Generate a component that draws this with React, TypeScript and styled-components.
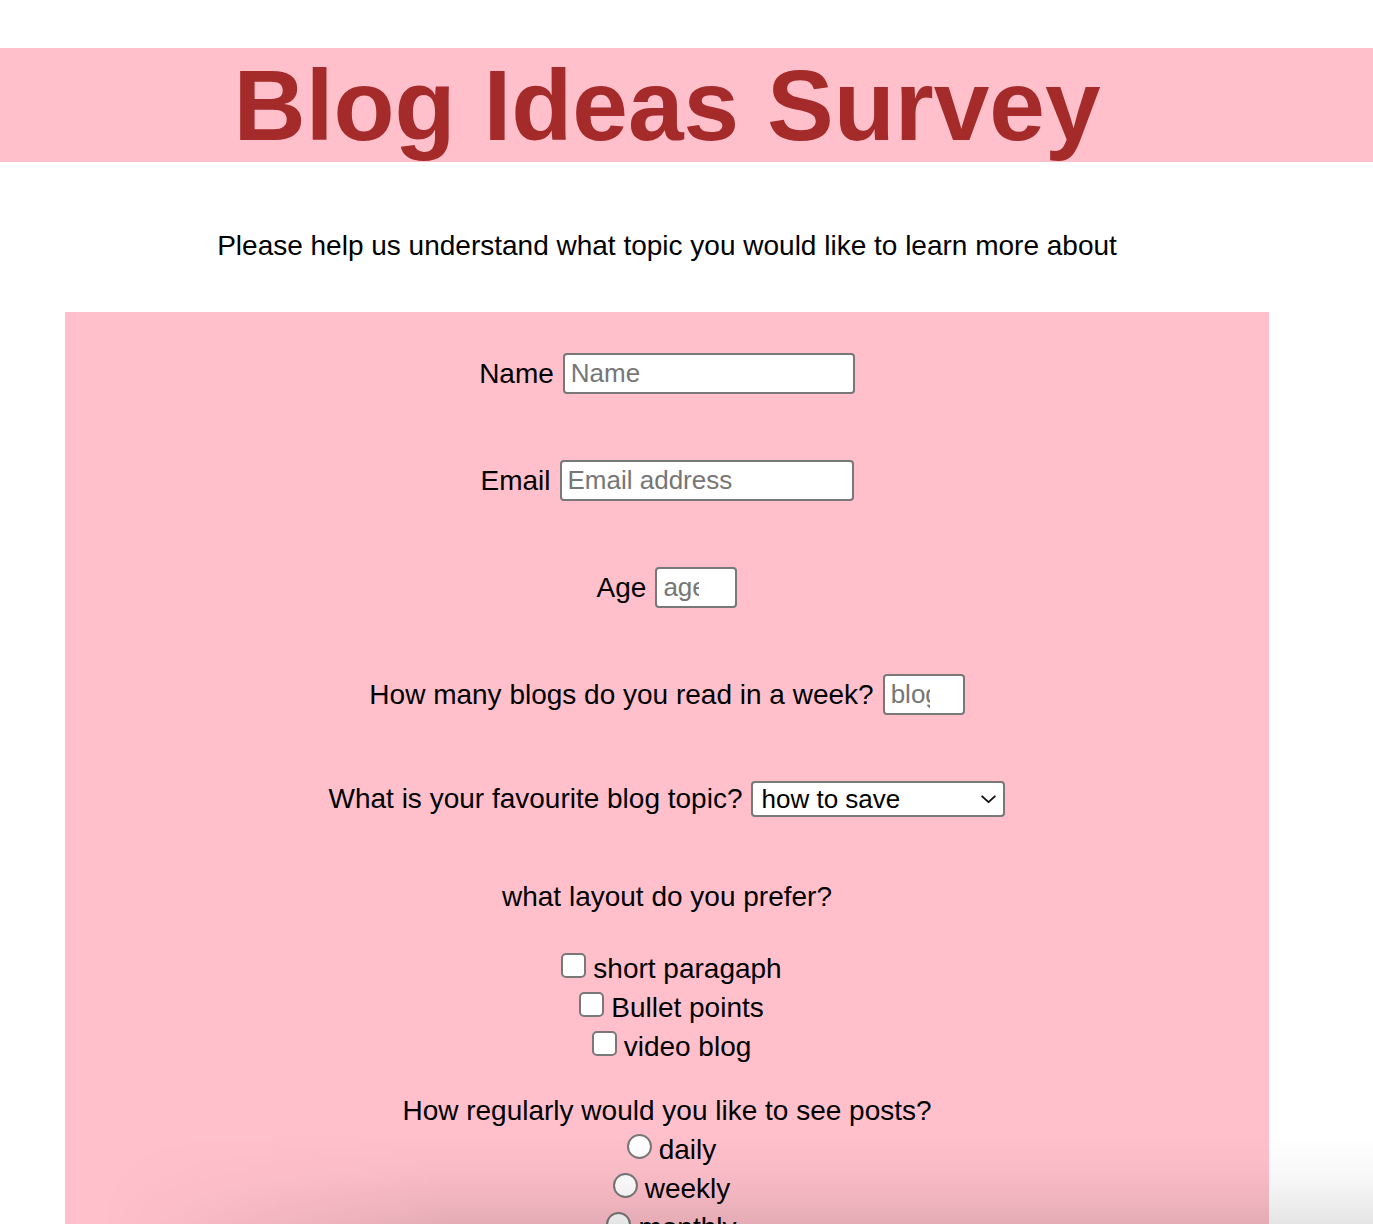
import React from "react";
import styled, { createGlobalStyle } from "styled-components";

const GlobalStyle = createGlobalStyle`
  html, body {
    margin: 0;
    padding: 0;
    background: #ffffff;
    font-family: "Liberation Sans", Arial, Helvetica, sans-serif;
    color: #000000;
    overflow: hidden;
  }
  * { box-sizing: border-box; }
`;

const Page = styled.div`
  padding-top: 48px;
  position: relative;
`;

const HeaderBand = styled.header`
  background: #ffc0cb;
  width: 100%;
`;

const Title = styled.h1`
  width: 1334px;
  margin: 0;
  text-align: center;
  font-size: 100px;
  font-weight: 700;
  line-height: normal;
  color: #a52a2a;
  height: 114px;
`;

const Intro = styled.p`
  width: 1334px;
  margin: 68px 0 50px;
  text-align: center;
  font-size: 28px;
  line-height: normal;
`;

const SurveyForm = styled.form`
  margin-left: 65px;
  width: 1204px;
  background: #ffc0cb;
  padding: 41px 0 120px;
  display: flex;
  flex-direction: column;
  align-items: center;
  font-size: 28px;
`;

const FieldRow = styled.div<{ $after?: number }>`
  display: flex;
  align-items: center;
  justify-content: center;
  gap: 9px;
  margin-bottom: ${(p) => p.$after ?? 66}px;
`;

const FieldLabel = styled.label`
  font-size: 28px;
  line-height: normal;
`;

const TextInput = styled.input<{ $w: number; $clip?: number }>`
  width: ${(p) => p.$w}px;
  height: 41px;
  border: 2px solid #787878;
  border-radius: 4px;
  background: #ffffff;
  font-family: "Liberation Sans", Arial, sans-serif;
  font-size: 26px;
  padding: 0 ${(p) => p.$clip ?? 6}px 0 6px;
  color: #000;
  outline: none;
  &::placeholder {
    color: #767676;
  }
`;

const SelectWrap = styled.div`
  position: relative;
  width: 254px;
  height: 36px;
`;

const Select = styled.select`
  appearance: none;
  -webkit-appearance: none;
  width: 100%;
  height: 100%;
  border: 2px solid #787878;
  border-radius: 4px;
  background: #ffffff;
  font-family: "Liberation Sans", Arial, sans-serif;
  font-size: 26px;
  color: #000;
  padding: 0 30px 0 8px;
  outline: none;
`;

const Chevron = styled.svg`
  position: absolute;
  right: 7px;
  top: 50%;
  transform: translateY(-50%);
  width: 19px;
  height: 19px;
  pointer-events: none;
`;

const Question = styled.div<{ $before: number }>`
  margin-top: ${(p) => p.$before}px;
  line-height: 38.5px;
  text-align: center;
`;

const OptionGroup = styled.div<{ $before?: number }>`
  margin-top: ${(p) => p.$before ?? 0}px;
`;

const OptionLine = styled.label`
  display: block;
  text-align: center;
  line-height: 39px;
`;

const Check = styled.input`
  appearance: none;
  -webkit-appearance: none;
  display: inline-block;
  vertical-align: baseline;
  width: 25px;
  height: 25px;
  margin: 0 7px 0 9px;
  border: 2px solid #787878;
  border-radius: 5px;
  background: #ffffff;
`;

const Radio = styled.input`
  appearance: none;
  -webkit-appearance: none;
  display: inline-block;
  vertical-align: baseline;
  width: 25px;
  height: 25px;
  margin: 0 7px 0 9px;
  border: 2px solid #787878;
  border-radius: 50%;
  background: #ffffff;
`;

const ShadowOverlay = styled.div`
  position: fixed;
  left: 0;
  right: 0;
  bottom: 0;
  height: 90px;
  pointer-events: none;
  background: linear-gradient(to bottom, rgba(0, 0, 0, 0) 0%, rgba(0, 0, 0, 0.03) 50%, rgba(0, 0, 0, 0.1) 100%);
  -webkit-mask-image: linear-gradient(to right, transparent 100px, black 450px);
  mask-image: linear-gradient(to right, transparent 100px, black 450px);
`;

export default function App() {
  return (
    <>
      <GlobalStyle />
      <Page>
        <HeaderBand>
          <Title>Blog Ideas Survey</Title>
        </HeaderBand>
        <Intro>Please help us understand what topic you would like to learn more about</Intro>
        <SurveyForm onSubmit={(e) => e.preventDefault()}>
          <FieldRow>
            <FieldLabel htmlFor="name">Name</FieldLabel>
            <TextInput id="name" type="text" placeholder="Name" $w={292} />
          </FieldRow>
          <FieldRow>
            <FieldLabel htmlFor="email">Email</FieldLabel>
            <TextInput id="email" type="email" placeholder="Email address" $w={294} />
          </FieldRow>
          <FieldRow>
            <FieldLabel htmlFor="age">Age</FieldLabel>
            <TextInput id="age" type="text" placeholder="age" $w={82} $clip={36} />
          </FieldRow>
          <FieldRow>
            <FieldLabel htmlFor="blogs">How many blogs do you read in a week?</FieldLabel>
            <TextInput id="blogs" type="text" placeholder="blogs" $w={82} $clip={33} />
          </FieldRow>
          <FieldRow $after={0}>
            <FieldLabel htmlFor="topic">What is your favourite blog topic?</FieldLabel>
            <SelectWrap>
              <Select id="topic" defaultValue="save">
                <option value="save">how to save</option>
                <option value="invest">how to invest</option>
                <option value="budget">how to budget</option>
              </Select>
              <Chevron viewBox="0 0 18 18" fill="none">
                <path d="M3 6.5 L9 12 L15 6.5" stroke="#111" strokeWidth="1.8" strokeLinecap="round" strokeLinejoin="round" />
              </Chevron>
            </SelectWrap>
          </FieldRow>

          <Question $before={61}>what layout do you prefer?</Question>
          <OptionGroup $before={32}>
            <OptionLine>
              <Check type="checkbox" name="layout" value="short" />short paragaph
            </OptionLine>
            <OptionLine>
              <Check type="checkbox" name="layout" value="bullet" />Bullet points
            </OptionLine>
            <OptionLine>
              <Check type="checkbox" name="layout" value="video" />video blog
            </OptionLine>
          </OptionGroup>

          <Question $before={26}>How regularly would you like to see posts?</Question>
          <OptionGroup>
            <OptionLine>
              <Radio type="radio" name="freq" value="daily" />daily
            </OptionLine>
            <OptionLine>
              <Radio type="radio" name="freq" value="weekly" />weekly
            </OptionLine>
            <OptionLine>
              <Radio type="radio" name="freq" value="monthly" />monthly
            </OptionLine>
          </OptionGroup>
        </SurveyForm>
        <ShadowOverlay />
      </Page>
    </>
  );
}
